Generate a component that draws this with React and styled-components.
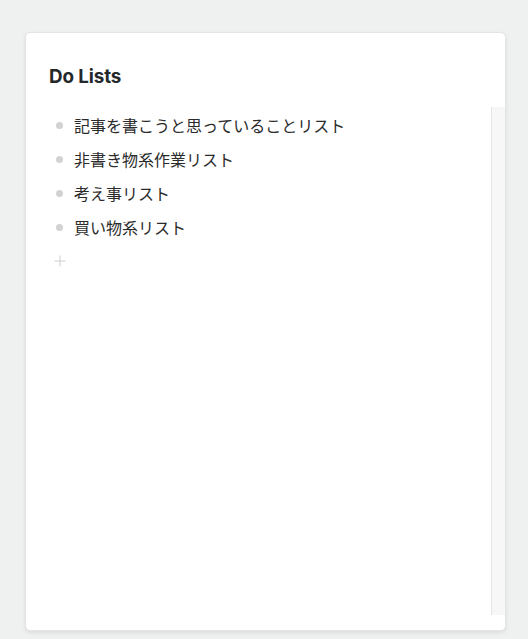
import React from "react";
import styled, { createGlobalStyle } from "styled-components";

const Global = createGlobalStyle`
  html, body { margin: 0; padding: 0; background: #eff1f0; }
  body { font-family: Inter, "Noto Sans CJK JP", sans-serif; }
`;

const Page = styled.div`
  padding: 32px 22px 8px 25px;
`;

const Card = styled.section`
  width: 481px;
  height: 599px;
  box-sizing: border-box;
  background: #fff;
  border: 1px solid #e3e5e4;
  border-radius: 5px;
  box-shadow: 0 2px 4px rgba(0, 0, 0, 0.08);
  display: flex;
  flex-direction: column;
  padding-bottom: 15px;
`;

const Header = styled.header`
  height: 74px;
  box-sizing: border-box;
  padding: 12px 23px 0;
  display: flex;
  align-items: center;
`;

const Title = styled.h2`
  margin: 0;
  font-family: Inter, "Noto Sans", sans-serif;
  font-size: 18.8px;
  font-weight: 700;
  color: #24282b;
  letter-spacing: -0.1px;
`;

const Body = styled.div`
  flex: 1;
  display: flex;
  min-height: 0;
`;

const List = styled.ul`
  flex: 1;
  list-style: none;
  margin: 0;
  padding: 1px 0 0 30px;
`;

const Row = styled.li`
  height: 34px;
  display: flex;
  align-items: center;
  gap: 11px;
  font-family: "Noto Sans CJK JP", sans-serif;
  font-size: 16px;
  color: #2b2b2b;
`;

const Bullet = styled.span`
  width: 7px;
  height: 7px;
  border-radius: 50%;
  background: #d2d2d2;
  flex: none;
`;

const AddRow = styled.li`
  height: 34px;
  display: flex;
  align-items: center;
  color: #cfcfcf;
`;

const Track = styled.div`
  width: 13px;
  flex: none;
  background: #f7f7f7;
  border-left: 1px solid #e4e4e4;
`;

const items = [
  "記事を書こうと思っていることリスト",
  "非書き物系作業リスト",
  "考え事リスト",
  "買い物系リスト",
];

export default function App() {
  return (
    <>
      <Global />
      <Page>
        <Card>
          <Header>
            <Title>Do Lists</Title>
          </Header>
          <Body>
            <List>
              {items.map((t) => (
                <Row key={t}>
                  <Bullet />
                  {t}
                </Row>
              ))}
              <AddRow>
                <svg width="12" height="12" viewBox="0 0 12 12" style={{ marginLeft: -2 }}>
                  <path d="M6 0.5V11.5M0.5 6H11.5" stroke="currentColor" strokeWidth="1" fill="none" />
                </svg>
              </AddRow>
            </List>
            <Track />
          </Body>
        </Card>
      </Page>
    </>
  );
}
